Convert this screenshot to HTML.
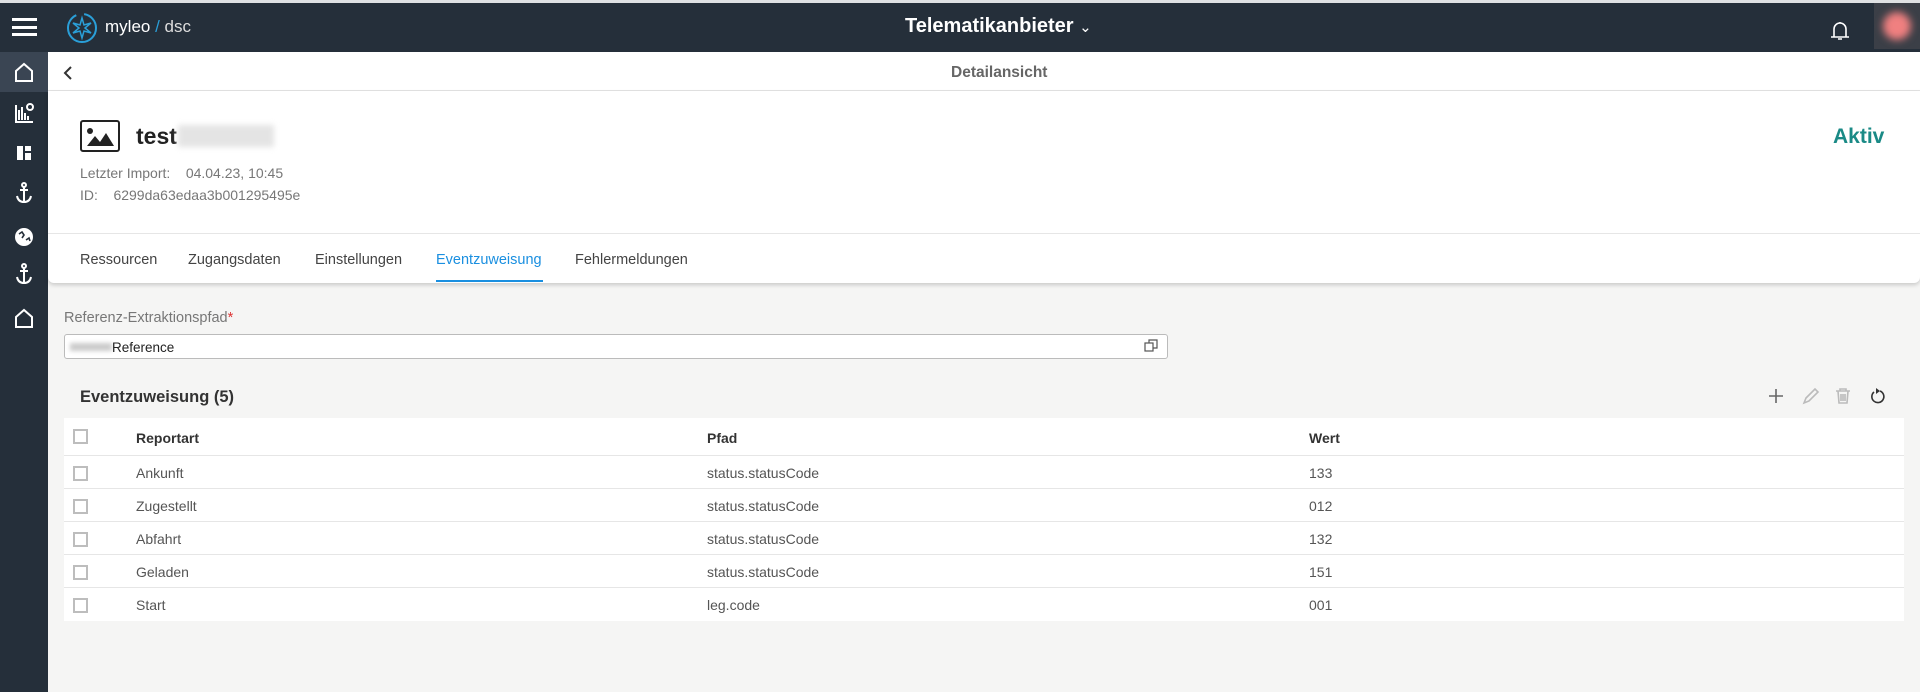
<!DOCTYPE html>
<html><head><meta charset="utf-8"><style>
*{box-sizing:border-box;margin:0;padding:0}
body{width:1920px;height:692px;overflow:hidden;background:#f5f5f4;font-family:"Liberation Sans",sans-serif;position:relative;color:#333}
.a{position:absolute}
.top{left:0;top:0;width:1920px;height:3px;background:#dfe1e3}
.hdr{left:0;top:3px;width:1920px;height:49px;background:#252f3a}
.side{left:0;top:52px;width:48px;height:640px;background:#252f3a}
.sub{left:48px;top:52px;width:1872px;height:39px;background:#fff;border-bottom:1px solid #e4e4e4}
.card{left:48px;top:91px;width:1872px;height:192px;background:#fff;box-shadow:0 2px 4px rgba(0,0,0,.18);border-radius:0 0 6px 6px}
.t{white-space:nowrap}
.gray{color:#777;font-size:14px}
.tab{top:252px;font-size:14.5px;color:#444}
.row{left:64px;width:1840px;height:33px;background:#fff;border-bottom:1px solid #e6e6e6}
.cb{position:absolute;left:9px;top:10px;width:15px;height:15px;border:2px solid #bdbdbd;background:#fff}
.c{position:absolute;top:9px;font-size:14px;color:#555}
</style></head><body>
<div class="a top"></div>
<div class="a hdr"></div>
<div class="a" style="left:12px;top:18px;width:25px;height:3px;background:#fff"></div>
<div class="a" style="left:12px;top:26px;width:25px;height:3px;background:#fff"></div>
<div class="a" style="left:12px;top:33px;width:25px;height:3px;background:#fff"></div>
<svg class="a" style="left:65px;top:11px" width="34" height="34" viewBox="0 0 34 34"><circle cx="17" cy="17" r="14" fill="none" stroke="#2a9fd8" stroke-width="2" stroke-dasharray="60 8"/><path d="M17 7L19 14L26 12L20 17L26 22L19 20L17 27L15 20L8 22L14 17L8 12L15 14Z" fill="none" stroke="#2a9fd8" stroke-width="1.5"/></svg>
<div class="a t" style="left:105px;top:17px;font-size:17px;color:#fff">myleo<span style="color:#2a9fd8"> /</span><span style="color:#ddd"> dsc</span></div>
<div class="a t" style="left:905px;top:15px;font-size:20px;font-weight:bold;color:#fff">Telematikanbieter <span style="font-weight:normal;font-size:15px">&#8964;</span></div>
<svg class="a" style="left:1828px;top:18px" width="24" height="24" viewBox="0 0 24 24"><path d="M6 19V11a6 6 0 0 1 12 0v8M3 19h18M10 21h4M12 4v1" fill="none" stroke="#fff" stroke-width="1.6"/></svg>
<div class="a" style="left:1874px;top:3px;width:46px;height:46px;background:#3b3f47"><div style="margin:9px 0 0 9px;width:28px;height:28px;border-radius:50%;background:#f08080;filter:blur(4px)"></div></div>
<div class="a side"></div>
<div class="a" style="left:0;top:52px;width:48px;height:40px;background:#3a4553"></div>
<svg class="a" style="left:14px;top:62px" width="20" height="270" viewBox="0 0 20 270" fill="none" stroke="#fff" stroke-width="2">
<path d="M2 9L10 2L18 9V19H2Z"/>
<path d="M2 43V60H19M5 58V48M8 58V45M11 58V51M14 58V54" />
<circle cx="16" cy="45" r="3"/>
<path d="M3 84h6v14H3zM11 84h6v5h-6zM11 91h6v7h-6z" fill="#fff" stroke="none"/>
<path d="M10 124v16M6 128h8M3 134c1 5 4 6 7 6s6-1 7-6" /><circle cx="10" cy="123" r="2"/>
<circle cx="10" cy="175" r="8" fill="#fff"/><path d="M5 172l3-2 2 3-2 3M12 178l3-2 1 3" stroke="#252f3a" stroke-width="1.6"/>
<path d="M10 205v16M6 209h8M3 215c1 5 4 6 7 6s6-1 7-6"/><circle cx="10" cy="204" r="2"/>
<path d="M2 255L10 248L18 255V265H2Z"/>
</svg>
<div class="a sub"></div>
<svg class="a" style="left:62px;top:65px" width="12" height="16" viewBox="0 0 12 16"><path d="M9 2L3 8L9 14" fill="none" stroke="#333" stroke-width="2"/></svg>
<div class="a t" style="left:951px;top:64px;font-size:15.5px;font-weight:bold;color:#666">Detailansicht</div>
<div class="a card"></div>
<svg class="a" style="left:80px;top:120px" width="40" height="32" viewBox="0 0 40 32"><rect x="1" y="1" width="38" height="30" rx="2" fill="none" stroke="#222" stroke-width="2"/><circle cx="10" cy="11" r="3" fill="#222"/><path d="M7 26L15 16L20 22L26 13L34 26Z" fill="#222"/></svg>
<div class="a t" style="left:136px;top:123px;font-size:23px;font-weight:bold;color:#222">test</div>
<div class="a" style="left:178px;top:125px;width:96px;height:22px;background:#e4e4e4;filter:blur(3px)"></div>
<div class="a t gray" style="left:80px;top:165px">Letzter Import:&nbsp;&nbsp;&nbsp; 04.04.23, 10:45</div>
<div class="a t gray" style="left:80px;top:187px">ID:&nbsp;&nbsp;&nbsp; 6299da63edaa3b001295495e</div>
<div class="a t" style="left:1833px;top:125px;font-size:21px;font-weight:bold;color:#1a8a86">Aktiv</div>
<div class="a" style="left:48px;top:233px;width:1872px;height:1px;background:#e6e6e6"></div>
<div class="a t tab" style="left:80px">Ressourcen</div>
<div class="a t tab" style="left:188px">Zugangsdaten</div>
<div class="a t tab" style="left:315px">Einstellungen</div>
<div class="a t tab" style="left:436px;color:#1a8fe0">Eventzuweisung</div>
<div class="a" style="left:436px;top:280px;width:107px;height:2px;background:#1a8fe0"></div>
<div class="a t tab" style="left:575px">Fehlermeldungen</div>
<div class="a t" style="left:64px;top:310px;font-size:14.5px;color:#777">Referenz-Extraktionspfad<span style="color:#d33">*</span></div>
<div class="a" style="left:64px;top:334px;width:1104px;height:25px;background:#fff;border:1px solid #bbb;border-radius:3px"></div>
<div class="a" style="left:70px;top:343px;width:42px;height:8px;background:#ccc;filter:blur(2px)"></div>
<div class="a t" style="left:112px;top:340px;font-size:13.5px;color:#222">Reference</div>
<svg class="a" style="left:1144px;top:339px" width="14" height="14" viewBox="0 0 14 14" fill="none" stroke="#555" stroke-width="1.2"><rect x="1" y="4" width="8" height="8"/><path d="M5 4V1h8v8h-4"/></svg>
<div class="a t" style="left:80px;top:388px;font-size:16.5px;font-weight:bold;color:#333">Eventzuweisung (5)</div>
<svg class="a" style="left:1766px;top:386px" width="122" height="20" viewBox="0 0 122 20" fill="none" stroke-width="1.6">
<path d="M10 3v14M3 10h14" stroke="#666"/>
<path d="M38 17l2-5 9-9 3 3-9 9z" stroke="#bbb"/>
<path d="M70 5h14M74 5V3h6v2M72 5l1 12h8l1-12M75 8v7M77 8v7M79 8v7" stroke="#bbb"/>
<path d="M114 5a6 6 0 1 1-6 1" stroke="#333"/><path d="M110 2l4 3-4 3z" fill="#333" stroke="none"/>
</svg>
<div class="a row" style="top:418px;height:38px"><div class="cb" style="top:11px"></div><div class="c" style="left:72px;top:12px;color:#333;font-weight:bold">Reportart</div><div class="c" style="left:643px;top:12px;color:#333;font-weight:bold">Pfad</div><div class="c" style="left:1245px;top:12px;color:#333;font-weight:bold">Wert</div></div>
<div class="a row" style="top:456px"><div class="cb"></div><div class="c" style="left:72px">Ankunft</div><div class="c" style="left:643px">status.statusCode</div><div class="c" style="left:1245px">133</div></div>
<div class="a row" style="top:489px"><div class="cb"></div><div class="c" style="left:72px">Zugestellt</div><div class="c" style="left:643px">status.statusCode</div><div class="c" style="left:1245px">012</div></div>
<div class="a row" style="top:522px"><div class="cb"></div><div class="c" style="left:72px">Abfahrt</div><div class="c" style="left:643px">status.statusCode</div><div class="c" style="left:1245px">132</div></div>
<div class="a row" style="top:555px"><div class="cb"></div><div class="c" style="left:72px">Geladen</div><div class="c" style="left:643px">status.statusCode</div><div class="c" style="left:1245px">151</div></div>
<div class="a row" style="top:588px;border-bottom:none"><div class="cb"></div><div class="c" style="left:72px">Start</div><div class="c" style="left:643px">leg.code</div><div class="c" style="left:1245px">001</div></div>
</body></html>
